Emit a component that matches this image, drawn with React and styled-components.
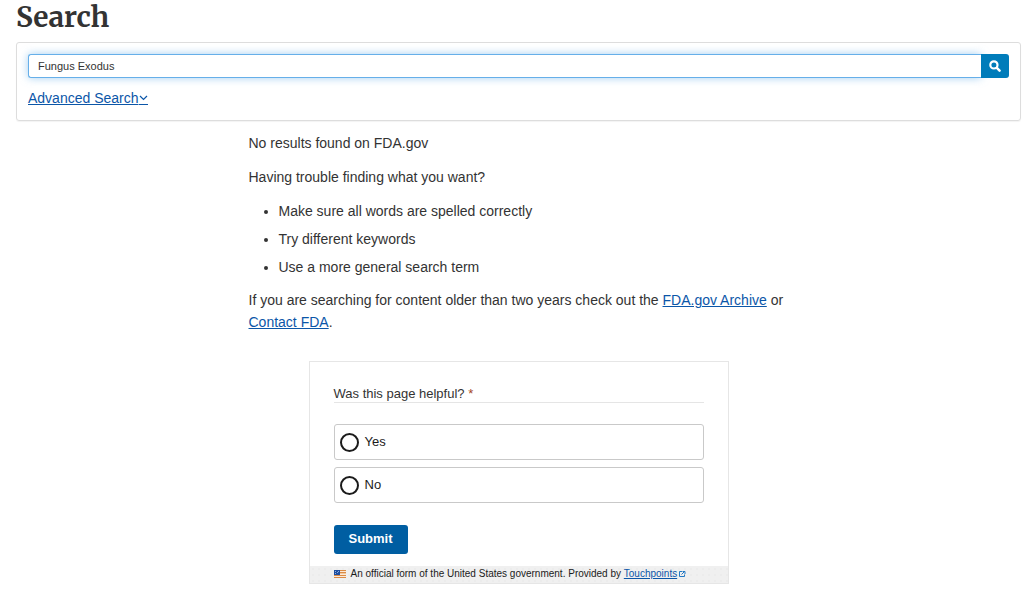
import React, { useState } from 'react';
import styled, { createGlobalStyle } from 'styled-components';

const GlobalStyle = createGlobalStyle`
    * {
        box-sizing: border-box;
    }
    body {
        margin: 0;
        background: #fff;
        color: #333;
        font-family: "Liberation Sans", Arial, sans-serif;
        font-size: 14px;
        line-height: 22px;
    }
`;

const Page = styled.main`
    padding: 0 3px 16px 16px;
`;

const Title = styled.h1`
    margin: 0 0 8px;
    font-family: Merriweather, "DejaVu Serif Condensed", "DejaVu Serif", serif;
    font-size: 28px;
    font-weight: bold;
    line-height: 34px;
`;

const SearchPanel = styled.form`
    padding: 11px;
    border: 1px solid #ddd;
    border-radius: 3px;
    box-shadow: 0 1px 1px rgba(0, 0, 0, 0.05);
`;

const SearchRow = styled.div`
    display: flex;
    height: 24px;
    margin-bottom: 9px;
`;

const SearchInput = styled.input`
    flex: 1;
    min-width: 0;
    padding: 0 9px;
    border: 1px solid #66afe9;
    border-right: 0;
    border-radius: 3px 0 0 3px;
    outline: 0;
    box-shadow: 0 0 8px rgba(102, 175, 233, 0.6);
    color: #333;
    font-family: inherit;
    font-size: 11px;
`;

const SearchButton = styled.button`
    position: relative;
    display: flex;
    align-items: center;
    justify-content: center;
    width: 28px;
    padding: 0;
    border: 0;
    border-radius: 0 3px 3px 0;
    background: #007cba;
    color: #fff;
    cursor: pointer;
`;

const Link = styled.a`
    color: #0b56a8;
    text-decoration: underline;
`;

const AdvancedLink = styled(Link)`
    display: block;
    width: fit-content;
`;

const Results = styled.section`
    max-width: 540px;
    margin: 11px auto 0;
`;

const Text = styled.p`
    margin: 0 0 12px;
`;

const Tips = styled.ul`
    margin: 0 0 11px;
    padding-left: 30px;
`;

const Tip = styled.li`
    & + & {
        margin-top: 6px;
    }
`;

const Survey = styled.form`
    max-width: 420px;
    margin: 28px auto 0;
    border: 1px solid #e6e6e6;
    color: #1b1b1b;
    font-size: 13px;
`;

const SurveyBody = styled.div`
    padding: 23px 24px 12px;
`;

const Question = styled.fieldset`
    margin: 0 0 22px;
    padding: 0;
    border: 0;
`;

const Legend = styled.legend`
    width: 100%;
    margin-bottom: 21px;
    padding: 0;
    border-bottom: 1px solid #e5e5e5;
    color: #333;
    line-height: 17px;
`;

const Required = styled.abbr`
    color: #a5461f;
    text-decoration: none;
`;

const Option = styled.label`
    display: flex;
    align-items: center;
    gap: 6px;
    height: 36px;
    padding: 0 5px;
    border: 1px solid #c9c9c9;
    border-radius: 3px;
    cursor: pointer;

    & + & {
        margin-top: 7px;
    }
`;

const Radio = styled.input`
    appearance: none;
    width: 19px;
    height: 19px;
    margin: 0;
    border: 2px solid #1b1b1b;
    border-radius: 50%;
    background: #fff;

    &:checked {
        border-color: #005ea2;
        background: #005ea2;
        box-shadow: inset 0 0 0 2px #fff;
    }
`;

const SubmitButton = styled.button`
    display: block;
    height: 29px;
    padding: 0 15px 2px;
    border: 0;
    border-radius: 3px;
    background: #005ea2;
    color: #fff;
    font-family: inherit;
    font-size: 13px;
    font-weight: bold;
    cursor: pointer;
`;

const SurveyFooter = styled.footer`
    display: flex;
    align-items: center;
    height: 17px;
    padding: 0 24px 1px;
    background-color: #f0f0f0;
    background-image: radial-gradient(#ececec 1px, transparent 1px);
    background-size: 6px 6px;
    font-size: 10px;
    line-height: 16px;
    white-space: pre;
`;

const Flag = styled.svg`
    flex: none;
    margin-right: 5px;
`;

const Chevron = styled.svg`
    border-bottom: 1px solid;
    vertical-align: -2px;
`;

const tips = [
    'Make sure all words are spelled correctly',
    'Try different keywords',
    'Use a more general search term'
];

const SearchIcon = () => (
    <svg width="12" height="12" viewBox="0 0 11 11" fill="none" stroke="currentColor" aria-hidden="true">
        <circle cx="4.5" cy="4.5" r="3.3" strokeWidth="2" />
        <path d="M7.2 7.2L9.7 9.7" strokeWidth="2.3" strokeLinecap="round" />
    </svg>
);

const ChevronIcon = () => (
    <Chevron width="9" height="11" viewBox="0 0 9 10" fill="none" stroke="currentColor" aria-hidden="true">
        <path d="M1 2L4.5 5.5L8 2" strokeWidth="1.2" />
    </Chevron>
);

const FlagIcon = () => (
    <Flag width="12" height="8" viewBox="0 0 12 8" aria-hidden="true">
        <path fill="#fbe9d8" d="M0 0h12v8H0z" />
        <path fill="#db8b45" d="M0 0h12v1H0zM0 2h12v1H0zM0 5h12v1H0zM0 7h12v1H0z" />
        <path fill="#f3c99f" d="M0 3h12v1H0z" />
        <path fill="#1f4fa0" d="M0 0h6v5H0z" />
        <path fill="#8fabdd" d="M1 1h1v1H1zM3 2h1v1H3zM4 1h1v1H4zM1 3h1v1H1z" />
    </Flag>
);

const ExternalIcon = () => (
    <svg width="9" height="8" viewBox="0 0 9 8" fill="none" stroke="#2378c3" aria-hidden="true">
        <path d="M5 1.5H2.5v5h5V4.5M4.5 4.5L8 1M5.5 1.5h2.5v2.5" />
    </svg>
);

const App = () => {
    const [query, setQuery] = useState('Fungus Exodus');
    const stop = e => e.preventDefault();
    return (
        <>
            <GlobalStyle />
            <Page>
                <Title>Search</Title>
                <SearchPanel onSubmit={stop}>
                    <SearchRow>
                        <SearchInput
                            type="text"
                            aria-label="Search"
                            value={query}
                            onChange={e => setQuery(e.target.value)}
                        />
                        <SearchButton type="submit" aria-label="Search">
                            <SearchIcon />
                        </SearchButton>
                    </SearchRow>
                    <AdvancedLink href="#advanced">Advanced Search<ChevronIcon /></AdvancedLink>
                </SearchPanel>
                <Results>
                    <Text>No results found on FDA.gov</Text>
                    <Text>Having trouble finding what you want?</Text>
                    <Tips>
                        {tips.map(tip => <Tip key={tip}>{tip}</Tip>)}
                    </Tips>
                    <Text>
                        If you are searching for content older than two years check out the{' '}
                        <Link href="#archive">FDA.gov Archive</Link> or{' '}
                        <Link href="#contact">Contact FDA</Link>.
                    </Text>
                </Results>
                <Survey onSubmit={stop}>
                    <SurveyBody>
                        <Question>
                            <Legend>Was this page helpful? <Required>*</Required></Legend>
                            <Option><Radio type="radio" name="helpful" value="yes" />Yes</Option>
                            <Option><Radio type="radio" name="helpful" value="no" />No</Option>
                        </Question>
                        <SubmitButton type="submit">Submit</SubmitButton>
                    </SurveyBody>
                    <SurveyFooter>
                        <FlagIcon />
                        An official form of the United States government. Provided by{' '}
                        <Link href="#touchpoints">Touchpoints</Link>
                        <ExternalIcon />
                    </SurveyFooter>
                </Survey>
            </Page>
        </>
    );
};

export default App;
